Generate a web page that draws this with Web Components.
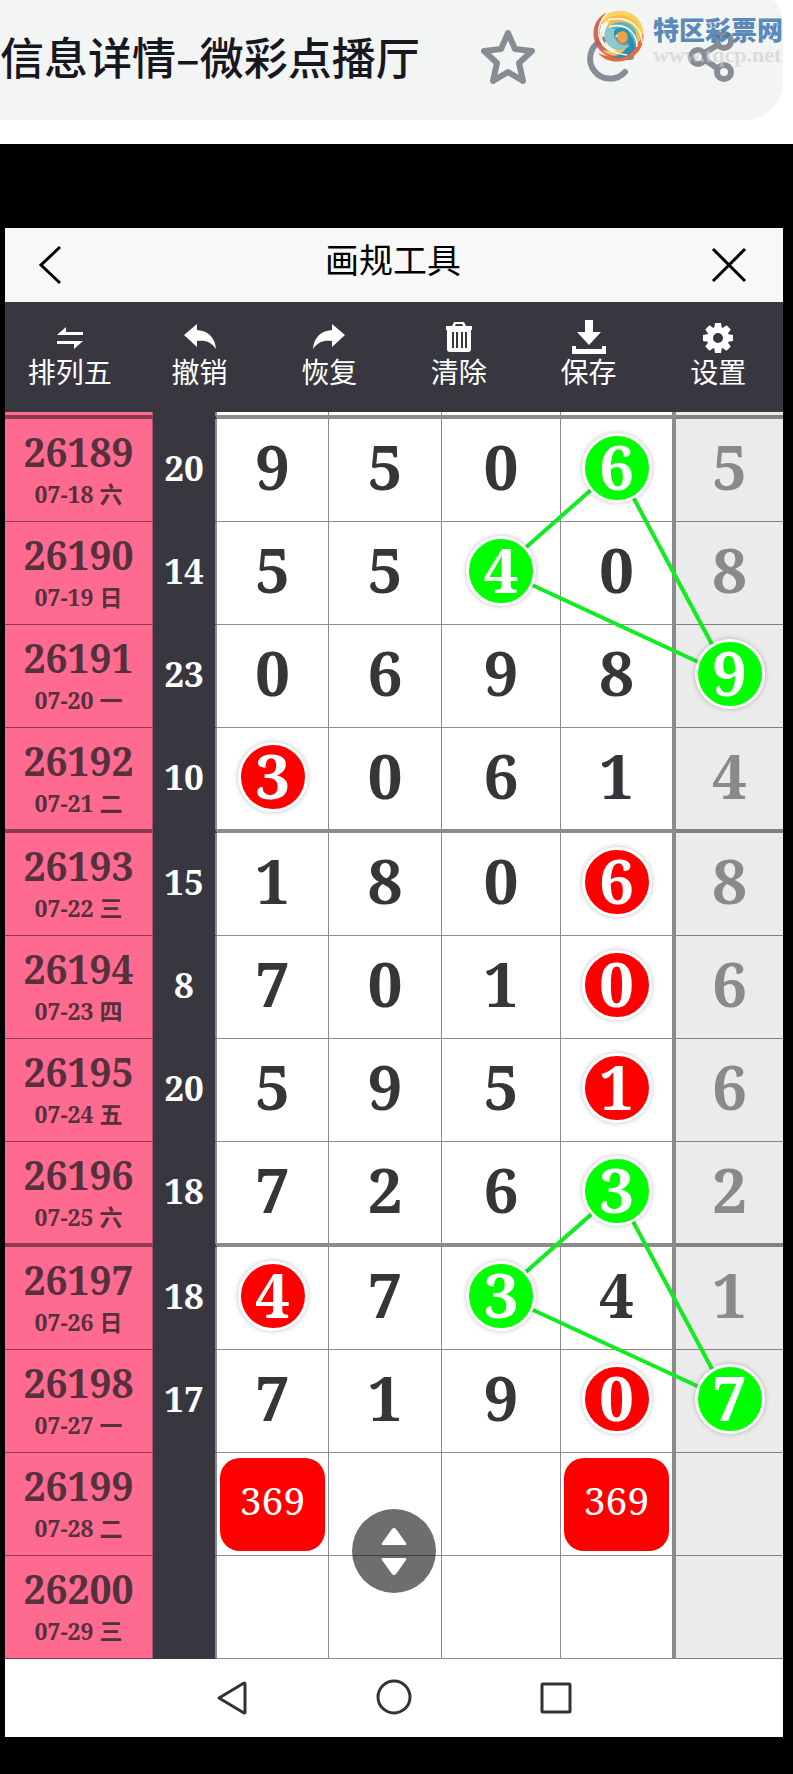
<!DOCTYPE html>
<html lang="zh-CN">
<head>
<meta charset="utf-8">
<meta name="viewport" content="width=device-width, initial-scale=1">
<title>画规工具</title>
<style>
    body {
        margin: 0;
        background: #000;
        font-family: "Noto Sans CJK SC", sans-serif;
    }
</style>
</head>
<body>
<browser-bar page-title="信息详情–微彩点播厅">
    <site-mark slot="mark"></site-mark>
</browser-bar>
<draw-app></draw-app>

<script>
class SiteMark extends HTMLElement {
    constructor() {
        super();
        this.shadowDOM = this.attachShadow({mode: 'open'});
    }

    connectedCallback() {
        this.shadowDOM.innerHTML = `
        <style>
        :host {
            display: flex;
            gap: 8px;
            pointer-events: none;
        }

        svg {
            width: 54px;
            height: 54px;
        }

        .names {
            display: flex;
            flex-direction: column;
            padding-top: 2px;
        }

        .name {
            font-size: 26px;
            line-height: 36px;
            font-weight: 900;
            color: #3f78b0;
            opacity: 0.85;
        }

        .url {
            font: bold 22px/16px "Liberation Serif", serif;
            color: #c9ccd0;
            opacity: 0.6;
        }
        </style>
        <svg viewBox="0 0 54 54" fill="none" aria-hidden="true">
            <path d="M17 3C3 8-2 26 7 39c8 11 24 13 34 7C30 48 18 43 13 33 8 23 9 11 17 3z" fill="#cf5648" opacity=".9"/>
            <path d="M11 9C22-2 40 0 48 11c6 9 6 20 1 30 1-11-1-21-10-27C30 8 19 9 11 16z" fill="#f6d55d"/>
            <path d="M19 8c10-4 21-1 27 7 5 8 5 17 1 25 0-10-3-18-11-22-7-4-14-3-20 1z" fill="#f3bd53"/>
            <path d="M52 24c2 14-7 25-20 28-10 2-19-1-25-8 12 5 23 4 31-2 8-5 12-11 14-18z" fill="#df6b47"/>
            <path d="M48 27c-1 9-7 16-16 19-8 2-16 0-21-5 9 2 17 1 23-4 5-4 6-9 5-15z" fill="#f1c65b"/>
            <path d="M43 22c5 9 3 17-4 23-5 4-11 5-18 3 8-2 13-6 15-11 2-6 1-11-3-15z" fill="#2f8eae"/>
            <path d="M17 19c5-7 16-8 23-3 6 5 7 14 4 22-1-8-4-13-10-15s-12 0-14 4z" fill="#58b4c4"/>
            <path d="M17 16c-6 8-4 18 4 23 6 4 14 2 18-3-6 1-11 0-14-5-2-3-2-7 1-10-4-1-7-2-9-5z" fill="#8cc9c9"/>
            <path d="M23 22c4-5 12-4 15 1 2 4 1 9-3 12 0-5-1-9-5-10-3-1-6 1-7 4z" fill="#2e92ae"/>
            <path d="M27 24c3-3 8-2 9 1 2 4 0 8-4 9-4 0-7-5-5-10z" fill="#f0a43f"/>
            <path d="M17 3C3 17 5 36 22 43M11 15C6 32 15 44 36 46M51 34C51 18 38 6 17 11M46 38C46 23 34 13 18 18" stroke="#fffbe8" stroke-width="1.5"/>
        </svg>
        <div class="names">
            <span class="name">特区彩票网</span>
            <span class="url">www.tqcp.net</span>
        </div>
        `;
    }
}

customElements.define('site-mark', SiteMark);

class BrowserBar extends HTMLElement {
    constructor() {
        super();
        this.shadowDOM = this.attachShadow({mode: 'open'});
    }

    connectedCallback() {
        this.shadowDOM.innerHTML = `
        <style>
        :host {
            display: block;
            position: relative;
            background: white;
            padding: 0 10px 24px 0;
            overflow: hidden;
        }

        .bar {
            display: flex;
            align-items: center;
            justify-content: space-between;
            height: 120px;
            box-sizing: border-box;
            padding: 0 46px 8px 0;
            background: #f3f4f4;
            border-radius: 0 12px 38px 0 / 0 25px 38px 0;
        }

        .title {
            font-size: 44px;
            line-height: 60px;
            font-weight: 500;
            white-space: nowrap;
            color: #17171f;
        }

        .actions {
            display: flex;
            gap: 44px;
        }

        button {
            width: 56px;
            height: 56px;
            padding: 0;
            border: 0;
            background: none;
            color: #868d94;
            cursor: pointer;
        }

        svg {
            display: block;
            fill: none;
            stroke: currentColor;
            stroke-width: 6;
            stroke-linecap: round;
            stroke-linejoin: round;
        }

        slot {
            display: block;
            position: absolute;
            top: 9px;
            right: 10px;
        }
        </style>
        <div class="bar">
            <div class="title">${this.getAttribute('page-title')}</div>
            <div class="actions">
                <button type="button" aria-label="收藏">
                    <svg width="56" height="56" viewBox="0 0 56 56"><path d="M27 5l7 16 17 2-13 12 4 18-15-9-15 9 4-18L3 23l17-2z"/></svg>
                </button>
                <button type="button" aria-label="刷新">
                    <svg width="56" height="56" viewBox="0 0 56 56"><path d="M44 44a20 20 0 1 1 4-20M50 17v12H40"/></svg>
                </button>
                <button type="button" aria-label="分享">
                    <svg width="56" height="56" viewBox="0 0 56 56"><circle cx="17" cy="29" r="7"/><circle cx="43" cy="13" r="7"/><circle cx="43" cy="44" r="7"/><path d="M23 25l14-8M24 32l12 8"/></svg>
                </button>
            </div>
        </div>
        <slot name="mark"></slot>
        `;
    }
}

customElements.define('browser-bar', BrowserBar);

class ToolButton extends HTMLElement {
    constructor() {
        super();
        this.shadowDOM = this.attachShadow({mode: 'open'});
    }

    connectedCallback() {
        this.shadowDOM.innerHTML = `
        <style>
        :host {
            display: block;
            flex: 1 1 0;
        }

        button {
            display: flex;
            flex-direction: column;
            align-items: center;
            width: 100%;
            padding: 0;
            border: 0;
            background: none;
            font: inherit;
            font-size: 28px;
            line-height: 30px;
            color: white;
            cursor: pointer;
        }

        ::slotted(svg) {
            display: block;
            width: 36px;
            height: 36px;
            fill: currentColor;
        }
        </style>
        <button type="button">
            <slot></slot>
            <span>${this.getAttribute('label')}</span>
        </button>
        `;
    }
}

customElements.define('tool-button', ToolButton);

class NumberBall extends HTMLElement {
    constructor() {
        super();
        this.shadowDOM = this.attachShadow({mode: 'open'});
    }

    connectedCallback() {
        this.shadowDOM.innerHTML = `
        <style>
        :host {
            display: block;
            position: relative;
            z-index: 1;
            width: 64px;
            height: 64px;
            margin: 0 auto;
            line-height: 60px;
            border: 3px solid white;
            border-radius: 50%;
            box-shadow: 0 0 4px 1px rgba(0, 0, 0, 0.18);
            color: white;
            text-align: center;
            background: red;
        }

        :host([color="green"]) {
            background: #00ff00;
        }
        </style>
        <slot></slot>
        `;
    }
}

customElements.define('number-ball', NumberBall);

class PickBadge extends HTMLElement {
    constructor() {
        super();
        this.shadowDOM = this.attachShadow({mode: 'open'});
    }

    connectedCallback() {
        this.shadowDOM.innerHTML = `
        <style>
        :host {
            display: block;
            box-sizing: border-box;
            width: 105px;
            height: 93px;
            margin: 0 auto;
            padding-top: 16px;
            border-radius: 20px;
            background: red;
            color: white;
            font-size: 39px;
            line-height: 52px;
            font-weight: normal;
        }
        </style>
        <slot></slot>
        `;
    }
}

customElements.define('pick-badge', PickBadge);

// issue, date, sum, the five digits; r = red ball, g = green ball, b = badge
const DRAWS = [
    ['26189', '07-18 六', '20', ['9', '5', '0', 'g6', '5']],
    ['26190', '07-19 日', '14', ['5', '5', 'g4', '0', '8']],
    ['26191', '07-20 一', '23', ['0', '6', '9', '8', 'g9']],
    ['26192', '07-21 二', '10', ['r3', '0', '6', '1', '4']],
    ['26193', '07-22 三', '15', ['1', '8', '0', 'r6', '8']],
    ['26194', '07-23 四', '8', ['7', '0', '1', 'r0', '6']],
    ['26195', '07-24 五', '20', ['5', '9', '5', 'r1', '6']],
    ['26196', '07-25 六', '18', ['7', '2', '6', 'g3', '2']],
    ['26197', '07-26 日', '18', ['r4', '7', 'g3', '4', '1']],
    ['26198', '07-27 一', '17', ['7', '1', '9', 'r0', 'g7']],
    ['26199', '07-28 二', '', ['b369', '', '', 'b369', '']],
    ['26200', '07-29 三', '', ['', '', '', '', '']]
];

class TrendTable extends HTMLElement {
    constructor() {
        super();
        this.shadowDOM = this.attachShadow({mode: 'open'});
    }

    set draws(draws) {
        this._draws = draws;
        this.render();
    }

    cell(value) {
        const text = value.slice(1);
        if (value[0] === 'r') return `<td class="marked"><number-ball>${text}</number-ball></td>`;
        if (value[0] === 'g') return `<td class="marked"><number-ball color="green">${text}</number-ball></td>`;
        if (value[0] === 'b') return `<td class="pick"><pick-badge>${text}</pick-badge></td>`;
        return `<td>${value}</td>`;
    }

    render() {
        const rows = this._draws.map(([issue, date, sum, digits]) => `
            <tr>
                <th scope="row"><span class="issue">${issue}</span><span class="date">${date}</span></th>
                <td class="sum">${sum}</td>
                ${digits.map((d) => this.cell(d)).join('')}
            </tr>`).join('');

        this.shadowDOM.innerHTML = `
        <style>
        :host {
            --line: rgba(0, 0, 0, 0.45);
            display: block;
            position: relative;
            background: white;
            font-family: "Noto Serif", "Noto Sans CJK SC", serif;
            font-weight: bold;
            color: #36363a;
        }

        table {
            width: 100%;
            table-layout: fixed;
            border-collapse: separate;
            border-spacing: 0;
        }

        th, td {
            box-sizing: border-box;
            height: 103px;
            padding: 0 0 8px;
            border-right: 1px solid var(--line);
            border-bottom: 1px solid var(--line);
            text-align: center;
            vertical-align: middle;
            font-size: 62px;
            line-height: 70px;
        }

        thead td {
            height: 7px;
            padding: 0;
            border-bottom-width: 4px;
            font-size: 0;
            line-height: 0;
        }

        tbody tr:nth-child(4n):not(:last-child) > * {
            height: 105px;
            border-bottom-width: 4px;
        }

        th, thead td:first-child {
            background: #ff6a90;
            border-right: 1px solid #a8526d;
        }

        th {
            color: #55303d;
            padding: 0 0 4px;
        }

        .issue, .date {
            display: block;
        }

        .issue {
            font-size: 39px;
            line-height: 52px;
        }

        .date {
            font-size: 23px;
            line-height: 32px;
        }

        .sum, thead td:nth-child(2) {
            background: #38373f;
            color: white;
            border-right: 2px solid #8a8a8d;
            border-bottom-color: transparent;
        }

        .sum {
            padding-bottom: 4px;
            font-size: 35px;
        }

        .marked {
            padding-bottom: 4px;
        }

        .pick {
            padding: 0;
        }

        td:nth-child(6) {
            border-right-width: 4px;
        }

        td:nth-child(7) {
            background: #ebebeb;
            color: #8a8a8a;
            border-right: 0;
        }

        .links {
            position: absolute;
            inset: 0;
            width: 100%;
            height: 100%;
            fill: none;
            stroke: #10ec20;
            stroke-width: 4;
        }
        </style>
        <table>
            <colgroup>
                <col style="width: 148px"><col style="width: 64px"><col style="width: 112px"><col style="width: 113px"><col style="width: 119px"><col style="width: 115px"><col style="width: 107px">
            </colgroup>
            <thead><tr>${'<td></td>'.repeat(7)}</tr></thead>
            <tbody>${rows}</tbody>
        </table>
        <svg class="links" viewBox="0 0 778 1246" preserveAspectRatio="none" aria-hidden="true">
            <polygon points="612,55 495,158 724,264"/>
            <polygon points="612,779 495,882 724,988"/>
        </svg>
        `;
    }
}

customElements.define('trend-table', TrendTable);

class DrawApp extends HTMLElement {
    constructor() {
        super();
        this.shadowDOM = this.attachShadow({mode: 'open'});
    }

    connectedCallback() {
        this.shadowDOM.innerHTML = `
        <style>
        :host {
            display: block;
            margin: 84px 10px 37px 5px;
            background: white;
        }

        button {
            padding: 0;
            border: 0;
            background: none;
            color: inherit;
            cursor: pointer;
        }

        button svg {
            display: block;
        }

        header {
            display: flex;
            align-items: center;
            justify-content: space-between;
            height: 74px;
            padding: 0 34px 0 32px;
            background: #f8f8f8;
            color: black;
        }

        header svg, nav svg {
            fill: none;
            stroke: currentColor;
            stroke-width: 3;
        }

        h1 {
            margin: 0;
            padding-bottom: 12px;
            font-size: 34px;
            line-height: 44px;
            font-weight: normal;
        }

        .tools {
            display: flex;
            height: 92px;
            padding-top: 18px;
            background: #38373f;
        }

        .chart {
            position: relative;
        }

        .scroll {
            position: absolute;
            z-index: 2;
            left: 50%;
            bottom: 66px;
            width: 84px;
            height: 84px;
            margin-left: -42px;
            border-radius: 50%;
            background: rgba(0, 0, 0, 0.57);
        }

        nav {
            display: flex;
            align-items: center;
            justify-content: center;
            gap: 122px;
            height: 78px;
            color: #333;
        }
        </style>
        <header>
            <button type="button" aria-label="返回"><svg width="40" height="44" viewBox="0 0 40 44"><path d="M23 4L4 22l19 18"/></svg></button>
            <h1>画规工具</h1>
            <button type="button" aria-label="关闭"><svg width="40" height="40" viewBox="0 0 40 40"><path d="M4 4l32 32M36 4L4 36"/></svg></button>
        </header>
        <div class="tools">
            <tool-button label="排列五"><svg viewBox="0 0 36 36"><path d="M5 15l9-8v5h17v3zM31 21l-9 8v-5H5v-3z"/></svg></tool-button>
            <tool-button label="撤销"><svg viewBox="0 0 36 36"><path d="M2 15L15 4v6c12 1 18 8 19 19-5-7-10-9-19-8v6z"/></svg></tool-button>
            <tool-button label="恢复"><svg viewBox="0 0 36 36"><path d="M34 15L21 4v6C9 11 3 18 2 29c5-7 10-9 19-8v6z"/></svg></tool-button>
            <tool-button label="清除"><svg viewBox="0 0 36 36"><path fill-rule="evenodd" d="M5 6h6l2-4h10l2 4h6v4h-1v19q0 3-3 3H9q-3 0-3-3V10H5zM14 6h8l-1-2h-6zM11 12v16h2V12zM15 12v16h2V12zM20 12v16h2V12zM24 12v16h2V12z"/></svg></tool-button>
            <tool-button label="保存"><svg viewBox="0 0 36 36"><path d="M14 0h8v12h8L18 25 6 12h8zM1 26h4v3h26v-3h4v8H1z"/></svg></tool-button>
            <tool-button label="设置"><svg viewBox="0 0 36 36"><g transform="translate(18 18)"><circle r="8" fill="none" stroke="white" stroke-width="6"/><path d="M-3-15h6l1 6h-8zM-3 15h6l1-6h-8zM-15-3v6l6 1v-8zM15-3v6l-6 1v-8z"/><path transform="rotate(45)" d="M-3-15h6l1 6h-8zM-3 15h6l1-6h-8zM-15-3v6l6 1v-8zM15-3v6l-6 1v-8z"/></g></svg></tool-button>
        </div>
        <div class="chart">
            <trend-table></trend-table>
            <button class="scroll" type="button" aria-label="滚动"><svg width="84" height="84" viewBox="0 0 84 84" fill="white"><path d="M42 19q1 0 2 1l10 14q1 2-1 2H31q-2 0-1-2l10-14q1-1 2-1zM42 66q1 0 2-1l10-14q1-2-1-2H31q-2 0-1 2l10 14q1 1 2 1z"/></svg></button>
        </div>
        <nav>
            <button type="button" aria-label="后退"><svg width="40" height="40" viewBox="0 0 40 40"><path d="M7 20L32 5q1 0 1 1v28q0 1-1 1z" stroke-linejoin="round"/></svg></button>
            <button type="button" aria-label="主页"><svg width="40" height="40" viewBox="0 0 40 40"><circle cx="20" cy="19" r="16"/></svg></button>
            <button type="button" aria-label="最近任务"><svg width="40" height="40" viewBox="0 0 40 40"><rect x="6" y="6" width="28" height="28" rx="1"/></svg></button>
        </nav>
        `;

        this.shadowDOM.querySelector('trend-table').draws = DRAWS;
    }
}

customElements.define('draw-app', DrawApp);
</script>
</body>
</html>
